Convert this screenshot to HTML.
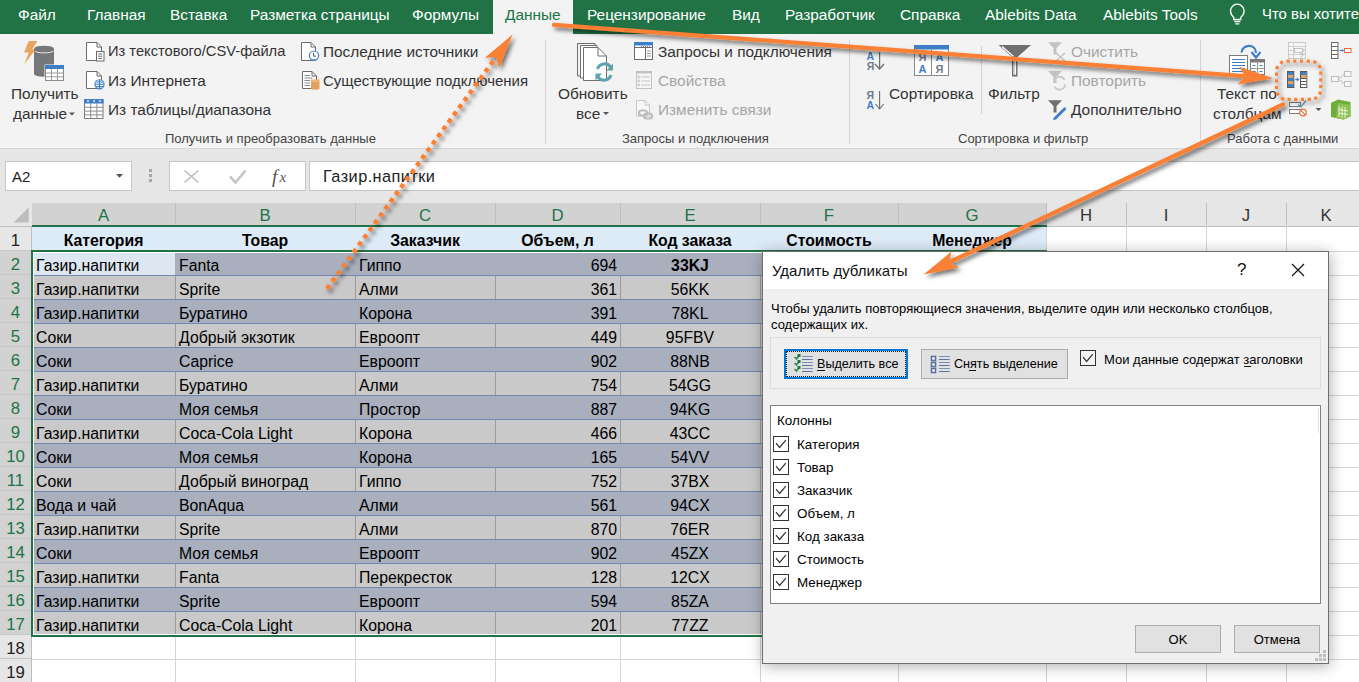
<!DOCTYPE html><html><head><meta charset="utf-8"><style>
*{margin:0;padding:0;box-sizing:border-box}
html,body{width:1359px;height:682px;overflow:hidden;background:#fff;font-family:"Liberation Sans",sans-serif;position:relative}
div,span,svg{position:absolute}
.t{white-space:nowrap;line-height:1}
.tab{color:#fff;font-size:15.4px;top:6.5px}
.rb{color:#333;font-size:15.4px;white-space:nowrap;line-height:1}
.dis{color:#a6a6a6}
.grp{color:#444;font-size:13px;white-space:nowrap;line-height:1;top:132px}
.cell{font-size:15.8px;color:#000;white-space:nowrap;line-height:1}
.dlg{font-size:13px;color:#000;white-space:nowrap;line-height:1}
</style></head><body>
<div style="left:0;top:0;width:1359px;height:34px;background:#217346"></div>
<div style="left:493px;top:0;width:80px;height:34px;background:#f3f3f3"></div>
<div class="t tab" style="left:18px;color:#fff;">Файл</div>
<div class="t tab" style="left:87px;color:#fff;">Главная</div>
<div class="t tab" style="left:170px;color:#fff;">Вставка</div>
<div class="t tab" style="left:250px;color:#fff;">Разметка страницы</div>
<div class="t tab" style="left:412px;color:#fff;">Формулы</div>
<div class="t tab" style="left:505px;color:#217346;">Данные</div>
<div class="t tab" style="left:587px;color:#fff;">Рецензирование</div>
<div class="t tab" style="left:732px;color:#fff;">Вид</div>
<div class="t tab" style="left:785px;color:#fff;">Разработчик</div>
<div class="t tab" style="left:900px;color:#fff;">Справка</div>
<div class="t tab" style="left:985px;color:#fff;">Ablebits Data</div>
<div class="t tab" style="left:1103px;color:#fff;">Ablebits Tools</div>
<div class="t tab" style="left:1262px;color:#fff;font-size:14.9px;">Что вы хотите</div>
<div style="left:0;top:34px;width:1359px;height:115px;background:#f3f3f3;border-bottom:1px solid #d6d6d6"></div>
<div style="left:545px;top:40px;width:1px;height:104px;background:#d4d4d4"></div>
<div style="left:849px;top:40px;width:1px;height:104px;background:#d4d4d4"></div>
<div style="left:1200px;top:40px;width:1px;height:104px;background:#d4d4d4"></div>
<div style="left:981px;top:46px;width:1px;height:68px;background:#d4d4d4"></div>
<div class="rb " style="left:108px;top:44px;font-size:14.7px">Из текстового/CSV-файла</div>
<div class="rb " style="left:108px;top:73px;font-size:15.4px">Из Интернета</div>
<div class="rb " style="left:108px;top:102px;font-size:15.4px">Из таблицы/диапазона</div>
<div class="rb " style="left:323px;top:44px;font-size:15.4px">Последние источники</div>
<div class="rb " style="left:323px;top:73px;font-size:15.0px">Существующие подключения</div>
<div class="rb " style="left:11px;top:86px;font-size:15.4px">Получить</div>
<div class="rb " style="left:13px;top:106px;font-size:15.4px">данные</div>
<div class="rb " style="left:558px;top:86px;font-size:15.4px">Обновить</div>
<div class="rb " style="left:576px;top:106px;font-size:15.4px">все</div>
<div class="rb " style="left:658px;top:44px;font-size:15.4px">Запросы и подключения</div>
<div class="rb dis" style="left:658px;top:73px;font-size:15.4px">Свойства</div>
<div class="rb dis" style="left:658px;top:102px;font-size:15.4px">Изменить связи</div>
<div class="rb " style="left:889px;top:86px;font-size:15.4px">Сортировка</div>
<div class="rb " style="left:988px;top:86px;font-size:15.4px">Фильтр</div>
<div class="rb dis" style="left:1071px;top:44px;font-size:15.4px">Очистить</div>
<div class="rb dis" style="left:1071px;top:73px;font-size:15.4px">Повторить</div>
<div class="rb " style="left:1071px;top:102px;font-size:15.4px">Дополнительно</div>
<div class="rb " style="left:1217px;top:86px;font-size:15.4px">Текст по</div>
<div class="rb " style="left:1213px;top:106px;font-size:15.4px">столбцам</div>
<div class="grp" style="left:165px">Получить и преобразовать данные</div>
<div class="grp" style="left:622px">Запросы и подключения</div>
<div class="grp" style="left:958px">Сортировка и фильтр</div>
<div class="grp" style="left:1227px">Работа с данными</div>
<svg style="left:0;top:0" width="1359" height="150" viewBox="0 0 1359 150">
<!-- bulb -->
<g fill="none" stroke="#fff" stroke-width="1.3">
<path d="M1233.8,17.5 C1231,15 1230.5,12.5 1230.5,11 A6.8,6.8 0 0 1 1244.1,11 C1244.1,12.5 1243.6,15 1240.8,17.5 V19.5 H1233.8 Z"/>
<path d="M1234.3,21.5 H1240.3 M1235.3,23.8 H1239.3"/>
</g>
<!-- Get data -->
<polygon points="28.8,41 37.4,41 32.2,49.2 35.6,49.2 24.4,64.2 28.8,52.6 24,52.6" fill="#e8a55c"/>
<path d="M34,48.6 A10,2.8 0 0 1 54,48.6 V74 A10,2.8 0 0 1 34,74 Z" fill="#76777a"/>
<path d="M34.6,50.8 A9.6,2.6 0 0 0 53.4,50.8" stroke="#e8e8e8" stroke-width="1" fill="none"/>
<rect x="44.5" y="64.5" width="20" height="17" fill="#f3f3f3"/>
<rect x="45.5" y="65.5" width="18" height="15" fill="#fff" stroke="#8a8a8a" stroke-width="1"/>
<rect x="45" y="65" width="19" height="4" fill="#3f7fc7"/>
<path d="M51.5,69 V80.5 M57.5,69 V80.5 M45.5,73 H63.5 M45.5,76.8 H63.5" stroke="#9a9a9a" stroke-width="1"/>
<!-- doc text -->
<g stroke="#6b6b6b" stroke-width="1" fill="#fff">
<path d="M86.5,42.5 H97 L101.5,47 V60.5 H86.5 Z"/>
<path d="M97,42.5 V47 H101.5" fill="none"/>
<rect x="96.5" y="51.5" width="7.5" height="9.5"/>
<path d="M98.2,54 H102.2 M98.2,56.2 H102.2 M98.2,58.4 H102.2" fill="none"/>
</g>
<!-- doc globe -->
<g stroke="#6b6b6b" stroke-width="1" fill="#fff">
<path d="M86.5,71.5 H97 L101.5,76 V88.5 H86.5 Z"/>
<path d="M97,71.5 V76 H101.5" fill="none"/>
</g>
<g stroke="#3c7fc6" stroke-width="1.1" fill="#fff">
<circle cx="99.5" cy="84.3" r="4.6"/>
<path d="M94.9,84.3 H104.1 M99.5,79.7 V88.9 M96,82 H103 M96,86.6 H103" fill="none"/>
</g>
<!-- table range -->
<rect x="84.5" y="99.5" width="18.5" height="19" fill="#fff" stroke="#7b7b7b"/>
<rect x="84" y="99" width="19.5" height="4.5" fill="#3f7fc7"/>
<path d="M86.5,100.5 h3 l-1.5,1.8z M92.5,100.5 h3 l-1.5,1.8z M98.5,100.5 h3 l-1.5,1.8z" fill="#fff"/>
<path d="M90.7,103.5 V118.5 M96.9,103.5 V118.5 M84.5,107.3 H103 M84.5,111.1 H103 M84.5,114.9 H103" stroke="#8c8c8c" stroke-width="1"/>
<!-- doc clock -->
<g stroke="#6b6b6b" stroke-width="1" fill="#fff">
<path d="M301.5,42.5 H311 L315.5,47 V60.5 H301.5 Z"/>
<path d="M311,42.5 V47 H315.5" fill="none"/>
</g>
<circle cx="314" cy="55.6" r="4.6" fill="#fff" stroke="#3c7fc6" stroke-width="1.2"/>
<path d="M313.6,52.8 V56.2 H316" stroke="#555" stroke-width="1" fill="none"/>
<!-- doc existing -->
<g stroke="#6b6b6b" stroke-width="1" fill="#fff">
<path d="M302.5,71.5 H312 L316.5,76 V88.5 H302.5 Z"/>
<path d="M312,71.5 V76 H316.5" fill="none"/>
<path d="M304.5,75.5 H310 M304.5,78 H312 M304.5,80.5 H310 M304.5,83 H310 M304.5,85.5 H310" fill="none" stroke="#8a8a8a"/>
</g>
<path d="M311,79.5 H319.5 V88.5 A4.25,1.2 0 0 1 311,88.5 Z" fill="#e2a35f"/>
<path d="M311.5,81 H319" stroke="#f5d9b0" stroke-width="0.8"/>
<!-- refresh all -->
<g stroke="#6f6f6f" stroke-width="1" fill="#fff">
<path d="M577.5,43.5 H595 V76 H577.5 Z" fill="none"/>
<path d="M580.5,45.5 H597 V78 H580.5 Z"/>
<path d="M583.5,47.5 H598 L606.5,56 V80.5 H583.5 Z"/>
<path d="M598,47.5 V56 H606.5" fill="none"/>
</g>
<g fill="none" stroke="#5fa3ad" stroke-width="3">
<path d="M597.5,69 A7.3,7.3 0 0 1 610.8,67.5"/>
<path d="M611,75 A7.3,7.3 0 0 1 597.7,76.5"/>
</g>
<polygon points="613,63.5 613,70.5 606.5,70.5" fill="#5fa3ad"/>
<polygon points="595.5,80.5 595.5,73.5 602,73.5" fill="#5fa3ad"/>
<!-- queries -->
<rect x="634.5" y="42.5" width="18" height="17" fill="#fff" stroke="#6b6b6b"/>
<rect x="634" y="42" width="19" height="3.5" fill="#3f7fc7"/>
<path d="M635,47.5 H652 M645.5,48 V59.5" stroke="#6b6b6b" stroke-width="1"/>
<path d="M647,51 H651 M647,53.5 H651 M647,56 H651" stroke="#9a9a9a" stroke-width="1"/>
<path d="M641,46.5 h1 M643,46.5 h1 M645,46.5 h1 M647,46.5 h1 M649,46.5 h1" stroke="#888" stroke-width="1"/>
<!-- properties (disabled) -->
<rect x="636.5" y="71.5" width="15" height="17" fill="#f6f6f6" stroke="#c3c3c3"/>
<rect x="636" y="71" width="16" height="2.5" fill="#c3c3c3"/>
<path d="M641,77 H650 M641,81 H650 M641,85 H650" stroke="#c3c3c3"/>
<circle cx="638.8" cy="77" r="1" fill="none" stroke="#c3c3c3"/><circle cx="638.8" cy="81" r="1" fill="none" stroke="#c3c3c3"/><circle cx="638.8" cy="85" r="1" fill="none" stroke="#c3c3c3"/>
<!-- edit links (disabled) -->
<path d="M636.5,100.5 H645 L649.5,105 V116 H636.5 Z" fill="#f6f6f6" stroke="#c9c9c9"/>
<path d="M645,100.5 V105 H649.5" fill="none" stroke="#c9c9c9"/>
<g fill="none" stroke="#bdbdbd" stroke-width="2.2">
<rect x="639" y="110.5" width="8" height="5" rx="2.5"/>
<rect x="644" y="113.5" width="8" height="5" rx="2.5"/>
</g>
<!-- dropdown arrows -->
<polygon points="69,112.5 75,112.5 72,115.5" fill="#555"/>
<polygon points="603,112 609,112 606,115" fill="#555"/>
<!-- sort A-Z -->
<g font-family="Liberation Sans" font-weight="bold" font-size="10.5">
<text x="866.5" y="59.8" fill="#3f7fc7">А</text>
<text x="866.8" y="69.8" fill="#6e7a8a">Я</text>
<text x="866.5" y="98.5" fill="#6e7a8a">Я</text>
<text x="866.5" y="108.8" fill="#3f7fc7">А</text>
</g>
<path d="M879.6,52 V69 M875,64 L879.6,69 L884,64" fill="none" stroke="#6b6b6b" stroke-width="1.2"/>
<path d="M879.6,91 V109 M875.5,104 L879.6,109 L883.7,104" fill="none" stroke="#6b6b6b" stroke-width="1.1"/>
<!-- sort dialog -->
<rect x="914.5" y="45.5" width="34" height="30" fill="#fff" stroke="#8a8a8a"/>
<rect x="914" y="45" width="35" height="4.5" fill="#3f7fc7"/>
<path d="M931.5,49.5 V75.5" stroke="#8a8a8a"/>
<g font-family="Liberation Sans" font-weight="bold" font-size="11">
<text x="918.5" y="61" fill="#6e7a8a">Я</text>
<text x="918.5" y="72.5" fill="#3f7fc7">А</text>
<text x="935.5" y="61" fill="#3f7fc7">А</text>
<text x="935.5" y="72.5" fill="#6e7a8a">Я</text>
</g>
<!-- filter -->
<path d="M998.6,45 H1031 L1017.5,57 V76.5 H1012 V57 Z" fill="#6f6f6f"/>
<path d="M1014,59 V74.8 M1015.5,59 V74.8" stroke="#fff" stroke-width="1.2"/>
<path d="M1002,46.5 L1013.5,56.5" stroke="#fff" stroke-width="1.3"/>
<!-- clear (disabled) -->
<path d="M1048,42.3 H1062 L1056.5,48 V54.5 H1053.5 V48 Z" fill="#c2c2c2"/>
<path d="M1056,53 L1065,61 M1065,53 L1056,61" stroke="#c2c2c2" stroke-width="1.5"/>
<!-- reapply (disabled) -->
<path d="M1048,71 H1062 L1056.5,77 V83 H1053.5 V77 Z" fill="#c2c2c2"/>
<g fill="none" stroke="#c9c9c9" stroke-width="1.8">
<path d="M1054,82 A5.5,5.5 0 0 1 1064.5,80"/>
<path d="M1065,84.5 A5.5,5.5 0 0 1 1054.5,86.5"/>
</g>
<!-- advanced -->
<path d="M1048,100.3 H1062 L1056.5,106 V112.5 H1053.5 V106 Z" fill="#6f6f6f"/>
<path d="M1054,117.5 L1064.5,107 L1066.5,109 L1056,119.5 L1053,120 Z" fill="#3f7fc7"/>
<!-- text to columns -->
<rect x="1229.5" y="55.5" width="18" height="19" fill="#fff" stroke="#7b7b7b"/>
<path d="M1232,59.5 H1245 M1232,62.5 H1245 M1232,65.5 H1245 M1232,68.5 H1245 M1232,71.5 H1245" stroke="#3f7fc7" stroke-width="1"/>
<rect x="1250.5" y="59.5" width="14" height="15" fill="#fff" stroke="#7b7b7b"/>
<rect x="1250" y="59" width="15" height="3.5" fill="#7b7b7b"/>
<path d="M1257.5,62.5 V74.5 M1250.5,68.5 H1264.5" stroke="#9a9a9a"/>
<path d="M1252.5,65.5 h3 M1259.5,65.5 h3 M1252.5,71.5 h3 M1259.5,71.5 h3" stroke="#3f7fc7" stroke-width="1.2"/>
<path d="M1241.5,52.5 C1242,44 1256,43 1256,53" fill="none" stroke="#3f7fc7" stroke-width="2.2"/>
<path d="M1251.5,52 L1256,57.5 L1260.5,52" fill="none" stroke="#3f7fc7" stroke-width="2.2"/>
<!-- flash fill (disabled) -->
<rect x="1288.5" y="42.5" width="17" height="16" fill="#f7f7f7" stroke="#c9c9c9"/>
<path d="M1288.5,46.5 H1305.5 M1288.5,50.5 H1305.5 M1288.5,54.5 H1305.5 M1293.5,42.5 V58.5" stroke="#d0d0d0"/>
<rect x="1294.5" y="48.5" width="8" height="4" fill="#f7f7f7" stroke="#c0c0c0"/>
<path d="M1303,49 L1299,55 H1302 L1298.5,60 L1305.5,53.5 H1302.5 L1305,49 Z" fill="#c9c9c9"/>
<!-- remove duplicates -->
<rect x="1287.5" y="71.5" width="6.3" height="16" fill="#3f7fc7" stroke="#5a5a5a"/>
<rect x="1288" y="74.9" width="5.3" height="3" fill="#e2a35f"/>
<rect x="1288" y="81.1" width="5.3" height="3" fill="#e2a35f"/>
<rect x="1300.5" y="71.5" width="6.3" height="16" fill="#fff" stroke="#5a5a5a"/>
<rect x="1301" y="72" width="5.3" height="3" fill="#3f7fc7"/>
<rect x="1301" y="75" width="5.3" height="3" fill="#e2a35f"/>
<path d="M1301,78.5 H1306.3 M1301,81.5 H1306.3 M1301,84.5 H1306.3" stroke="#5a5a5a"/>
<path d="M1295.2,79.5 H1298.5" stroke="#3f7fc7" stroke-width="1.2"/>
<polygon points="1299.3,79.5 1296.8,77.6 1296.8,81.4" fill="#3f7fc7"/>
<!-- data validation -->
<rect x="1289.5" y="102.5" width="11" height="4" fill="#fff" stroke="#7b7b7b"/>
<rect x="1289.5" y="109.5" width="11" height="4" fill="#fff" stroke="#7b7b7b"/>
<path d="M1298,104.5 L1301,107 L1306,100.5" fill="none" stroke="#5fa3ad" stroke-width="1.3"/>
<circle cx="1303" cy="112.5" r="3.3" fill="#fff" stroke="#e56d3a" stroke-width="1.2"/>
<path d="M1300.8,110.3 L1305.2,114.7" stroke="#e56d3a" stroke-width="1.2"/>
<polygon points="1315.5,108 1321.5,108 1318.5,111" fill="#555"/>
<!-- consolidate -->
<rect x="1331.5" y="42.5" width="6.5" height="16" fill="#fff" stroke="#6b6b6b"/>
<path d="M1331.5,46.5 H1338 M1331.5,50.5 H1338 M1331.5,54.5 H1338" stroke="#6b6b6b"/>
<path d="M1339.5,50.5 H1343.5" stroke="#3f7fc7"/>
<polygon points="1344,50.5 1342,49 1342,52" fill="#3f7fc7"/>
<rect x="1344.5" y="48.5" width="6.5" height="4" fill="#fff" stroke="#e56d3a"/>
<!-- relationships (disabled) -->
<g fill="#f7f7f7" stroke="#bdbdbd">
<rect x="1331.5" y="76.5" width="7" height="5"/>
<rect x="1344.5" y="71.5" width="6.5" height="5"/>
<rect x="1344.5" y="81.5" width="6.5" height="5"/>
<path d="M1338.5,79 L1344.5,74 M1338.5,79 L1344.5,84" fill="none"/>
</g>
<!-- data model -->
<path d="M1331,103 L1338,99.5 L1350.5,102 V116.5 L1343.5,119.5 L1331,117 Z" fill="#6fae3c"/>
<path d="M1338,103 L1350.5,105 V116.5 L1343.5,119.5 L1336,118" fill="#8cc152"/>
<path d="M1339,106 V117 M1342,106.5 V118 M1345,107 V118 M1339,109.5 L1348,111 M1339,113 L1348,114.5" stroke="#fff" stroke-width="0.8" fill="none"/>
</svg>
<div style="left:0;top:149px;width:1359px;height:54px;background:#e6e6e6"></div>
<div style="left:5px;top:161px;width:127px;height:30px;background:#fff;border:1px solid #c6c6c6"></div>
<div class="t" style="left:12px;top:169px;font-size:15px;color:#222">A2</div>
<div style="left:169px;top:161px;width:137px;height:30px;background:#fff;border:1px solid #c6c6c6"></div>
<div style="left:309px;top:161px;width:1060px;height:30px;background:#fff;border:1px solid #c6c6c6"></div>
<div class="t" style="left:323px;top:168px;font-size:16.3px;letter-spacing:0.45px;color:#222">Газир.напитки</div>
<svg style="left:0;top:150px" width="320" height="50" viewBox="0 150 320 50"><polygon points="116,174 123,174 119.5,177.8" fill="#555"/><rect x="149" y="169" width="3" height="3" fill="#a6a6a6"/><rect x="149" y="174" width="3" height="3" fill="#a6a6a6"/><rect x="149" y="179" width="3" height="3" fill="#a6a6a6"/><path d="M184.5,170.5 L198.5,182.5 M198.5,170.5 L184.5,182.5" stroke="#bdbdbd" stroke-width="1.6"/><path d="M230,176.5 L235.5,182.5 L245.5,170.5" fill="none" stroke="#c6c6c6" stroke-width="2.6"/><text x="272" y="183" font-family="Liberation Serif" font-style="italic" font-size="19" fill="#555">f</text><text x="279.5" y="182" font-family="Liberation Serif" font-style="italic" font-size="15" fill="#555">x</text></svg>
<div style="left:0;top:203px;width:1359px;height:24px;background:#e6e6e6;border-bottom:1px solid #bdbdbd"></div>
<div style="left:32px;top:203px;width:143px;height:23px;background:#d2d2d2"></div>
<div class="t" style="left:32px;top:208px;width:143px;text-align:center;font-size:16.8px;color:#217346">A</div>
<div style="left:175px;top:203px;width:180px;height:23px;background:#d2d2d2"></div>
<div class="t" style="left:175px;top:208px;width:180px;text-align:center;font-size:16.8px;color:#217346">B</div>
<div style="left:355px;top:203px;width:140px;height:23px;background:#d2d2d2"></div>
<div class="t" style="left:355px;top:208px;width:140px;text-align:center;font-size:16.8px;color:#217346">C</div>
<div style="left:495px;top:203px;width:125px;height:23px;background:#d2d2d2"></div>
<div class="t" style="left:495px;top:208px;width:125px;text-align:center;font-size:16.8px;color:#217346">D</div>
<div style="left:620px;top:203px;width:140px;height:23px;background:#d2d2d2"></div>
<div class="t" style="left:620px;top:208px;width:140px;text-align:center;font-size:16.8px;color:#217346">E</div>
<div style="left:760px;top:203px;width:138px;height:23px;background:#d2d2d2"></div>
<div class="t" style="left:760px;top:208px;width:138px;text-align:center;font-size:16.8px;color:#217346">F</div>
<div style="left:898px;top:203px;width:148px;height:23px;background:#d2d2d2"></div>
<div class="t" style="left:898px;top:208px;width:148px;text-align:center;font-size:16.8px;color:#217346">G</div>
<div style="left:1046px;top:203px;width:80px;height:23px;background:#e6e6e6"></div>
<div class="t" style="left:1046px;top:208px;width:80px;text-align:center;font-size:16.8px;color:#333">H</div>
<div style="left:1126px;top:203px;width:80px;height:23px;background:#e6e6e6"></div>
<div class="t" style="left:1126px;top:208px;width:80px;text-align:center;font-size:16.8px;color:#333">I</div>
<div style="left:1206px;top:203px;width:80px;height:23px;background:#e6e6e6"></div>
<div class="t" style="left:1206px;top:208px;width:80px;text-align:center;font-size:16.8px;color:#333">J</div>
<div style="left:1286px;top:203px;width:80px;height:23px;background:#e6e6e6"></div>
<div class="t" style="left:1286px;top:208px;width:80px;text-align:center;font-size:16.8px;color:#333">K</div>
<div style="left:175px;top:203px;width:1px;height:22px;background:#bfbfbf"></div>
<div style="left:355px;top:203px;width:1px;height:22px;background:#bfbfbf"></div>
<div style="left:495px;top:203px;width:1px;height:22px;background:#bfbfbf"></div>
<div style="left:620px;top:203px;width:1px;height:22px;background:#bfbfbf"></div>
<div style="left:760px;top:203px;width:1px;height:22px;background:#bfbfbf"></div>
<div style="left:898px;top:203px;width:1px;height:22px;background:#bfbfbf"></div>
<div style="left:1046px;top:203px;width:1px;height:22px;background:#bfbfbf"></div>
<div style="left:1126px;top:203px;width:1px;height:22px;background:#bfbfbf"></div>
<div style="left:1206px;top:203px;width:1px;height:22px;background:#bfbfbf"></div>
<div style="left:1286px;top:203px;width:1px;height:22px;background:#bfbfbf"></div>
<div style="left:1366px;top:203px;width:1px;height:22px;background:#bfbfbf"></div>
<div style="left:32px;top:225px;width:1015px;height:2px;background:#217346"></div>
<svg style="left:0;top:203px" width="32" height="22" viewBox="0 203 32 22"><polygon points="13.5,222.5 28.7,222.5 28.7,207.6" fill="#bdbdbd"/></svg>
<div style="left:0;top:227px;width:32px;height:456px;background:#e6e6e6;border-right:1px solid #bdbdbd"></div>
<div style="left:32px;top:227px;width:1327px;height:456px;background:#fff"></div>
<div style="left:0;top:227px;width:31px;height:24px;background:#e6e6e6;border-bottom:1px solid #c6c6c6"></div>
<div class="t" style="left:0;top:233px;width:31px;text-align:center;font-size:16.8px;color:#222">1</div>
<div style="left:32px;top:251px;width:1327px;height:1px;background:#d4d4d4"></div>
<div style="left:0;top:251px;width:31px;height:24px;background:#d2d2d2;border-bottom:1px solid #c6c6c6"></div>
<div class="t" style="left:0;top:257px;width:31px;text-align:center;font-size:16.8px;color:#217346">2</div>
<div style="left:32px;top:275px;width:1327px;height:1px;background:#d4d4d4"></div>
<div style="left:0;top:275px;width:31px;height:24px;background:#d2d2d2;border-bottom:1px solid #c6c6c6"></div>
<div class="t" style="left:0;top:281px;width:31px;text-align:center;font-size:16.8px;color:#217346">3</div>
<div style="left:32px;top:299px;width:1327px;height:1px;background:#d4d4d4"></div>
<div style="left:0;top:299px;width:31px;height:24px;background:#d2d2d2;border-bottom:1px solid #c6c6c6"></div>
<div class="t" style="left:0;top:305px;width:31px;text-align:center;font-size:16.8px;color:#217346">4</div>
<div style="left:32px;top:323px;width:1327px;height:1px;background:#d4d4d4"></div>
<div style="left:0;top:323px;width:31px;height:24px;background:#d2d2d2;border-bottom:1px solid #c6c6c6"></div>
<div class="t" style="left:0;top:329px;width:31px;text-align:center;font-size:16.8px;color:#217346">5</div>
<div style="left:32px;top:347px;width:1327px;height:1px;background:#d4d4d4"></div>
<div style="left:0;top:347px;width:31px;height:24px;background:#d2d2d2;border-bottom:1px solid #c6c6c6"></div>
<div class="t" style="left:0;top:353px;width:31px;text-align:center;font-size:16.8px;color:#217346">6</div>
<div style="left:32px;top:371px;width:1327px;height:1px;background:#d4d4d4"></div>
<div style="left:0;top:371px;width:31px;height:24px;background:#d2d2d2;border-bottom:1px solid #c6c6c6"></div>
<div class="t" style="left:0;top:377px;width:31px;text-align:center;font-size:16.8px;color:#217346">7</div>
<div style="left:32px;top:395px;width:1327px;height:1px;background:#d4d4d4"></div>
<div style="left:0;top:395px;width:31px;height:24px;background:#d2d2d2;border-bottom:1px solid #c6c6c6"></div>
<div class="t" style="left:0;top:401px;width:31px;text-align:center;font-size:16.8px;color:#217346">8</div>
<div style="left:32px;top:419px;width:1327px;height:1px;background:#d4d4d4"></div>
<div style="left:0;top:419px;width:31px;height:24px;background:#d2d2d2;border-bottom:1px solid #c6c6c6"></div>
<div class="t" style="left:0;top:425px;width:31px;text-align:center;font-size:16.8px;color:#217346">9</div>
<div style="left:32px;top:443px;width:1327px;height:1px;background:#d4d4d4"></div>
<div style="left:0;top:443px;width:31px;height:24px;background:#d2d2d2;border-bottom:1px solid #c6c6c6"></div>
<div class="t" style="left:0;top:449px;width:31px;text-align:center;font-size:16.8px;color:#217346">10</div>
<div style="left:32px;top:467px;width:1327px;height:1px;background:#d4d4d4"></div>
<div style="left:0;top:467px;width:31px;height:24px;background:#d2d2d2;border-bottom:1px solid #c6c6c6"></div>
<div class="t" style="left:0;top:473px;width:31px;text-align:center;font-size:16.8px;color:#217346">11</div>
<div style="left:32px;top:491px;width:1327px;height:1px;background:#d4d4d4"></div>
<div style="left:0;top:491px;width:31px;height:24px;background:#d2d2d2;border-bottom:1px solid #c6c6c6"></div>
<div class="t" style="left:0;top:497px;width:31px;text-align:center;font-size:16.8px;color:#217346">12</div>
<div style="left:32px;top:515px;width:1327px;height:1px;background:#d4d4d4"></div>
<div style="left:0;top:515px;width:31px;height:24px;background:#d2d2d2;border-bottom:1px solid #c6c6c6"></div>
<div class="t" style="left:0;top:521px;width:31px;text-align:center;font-size:16.8px;color:#217346">13</div>
<div style="left:32px;top:539px;width:1327px;height:1px;background:#d4d4d4"></div>
<div style="left:0;top:539px;width:31px;height:24px;background:#d2d2d2;border-bottom:1px solid #c6c6c6"></div>
<div class="t" style="left:0;top:545px;width:31px;text-align:center;font-size:16.8px;color:#217346">14</div>
<div style="left:32px;top:563px;width:1327px;height:1px;background:#d4d4d4"></div>
<div style="left:0;top:563px;width:31px;height:24px;background:#d2d2d2;border-bottom:1px solid #c6c6c6"></div>
<div class="t" style="left:0;top:569px;width:31px;text-align:center;font-size:16.8px;color:#217346">15</div>
<div style="left:32px;top:587px;width:1327px;height:1px;background:#d4d4d4"></div>
<div style="left:0;top:587px;width:31px;height:24px;background:#d2d2d2;border-bottom:1px solid #c6c6c6"></div>
<div class="t" style="left:0;top:593px;width:31px;text-align:center;font-size:16.8px;color:#217346">16</div>
<div style="left:32px;top:611px;width:1327px;height:1px;background:#d4d4d4"></div>
<div style="left:0;top:611px;width:31px;height:24px;background:#d2d2d2;border-bottom:1px solid #c6c6c6"></div>
<div class="t" style="left:0;top:617px;width:31px;text-align:center;font-size:16.8px;color:#217346">17</div>
<div style="left:32px;top:635px;width:1327px;height:1px;background:#d4d4d4"></div>
<div style="left:0;top:635px;width:31px;height:24px;background:#e6e6e6;border-bottom:1px solid #c6c6c6"></div>
<div class="t" style="left:0;top:641px;width:31px;text-align:center;font-size:16.8px;color:#222">18</div>
<div style="left:32px;top:659px;width:1327px;height:1px;background:#d4d4d4"></div>
<div style="left:0;top:659px;width:31px;height:24px;background:#e6e6e6;border-bottom:1px solid #c6c6c6"></div>
<div class="t" style="left:0;top:665px;width:31px;text-align:center;font-size:16.8px;color:#222">19</div>
<div style="left:32px;top:683px;width:1327px;height:1px;background:#d4d4d4"></div>
<div style="left:175px;top:227px;width:1px;height:456px;background:#d4d4d4"></div>
<div style="left:355px;top:227px;width:1px;height:456px;background:#d4d4d4"></div>
<div style="left:495px;top:227px;width:1px;height:456px;background:#d4d4d4"></div>
<div style="left:620px;top:227px;width:1px;height:456px;background:#d4d4d4"></div>
<div style="left:760px;top:227px;width:1px;height:456px;background:#d4d4d4"></div>
<div style="left:898px;top:227px;width:1px;height:456px;background:#d4d4d4"></div>
<div style="left:1046px;top:227px;width:1px;height:456px;background:#d4d4d4"></div>
<div style="left:1126px;top:227px;width:1px;height:456px;background:#d4d4d4"></div>
<div style="left:1206px;top:227px;width:1px;height:456px;background:#d4d4d4"></div>
<div style="left:1286px;top:227px;width:1px;height:456px;background:#d4d4d4"></div>
<div style="left:1366px;top:227px;width:1px;height:456px;background:#d4d4d4"></div>
<div style="left:32px;top:227px;width:1014px;height:23px;background:#ddebf7"></div>
<div class="t cell" style="left:32px;top:233px;width:143px;text-align:center;font-weight:bold">Категория</div>
<div class="t cell" style="left:175px;top:233px;width:180px;text-align:center;font-weight:bold">Товар</div>
<div class="t cell" style="left:355px;top:233px;width:140px;text-align:center;font-weight:bold">Заказчик</div>
<div class="t cell" style="left:495px;top:233px;width:125px;text-align:center;font-weight:bold">Объем, л</div>
<div class="t cell" style="left:620px;top:233px;width:140px;text-align:center;font-weight:bold">Код заказа</div>
<div class="t cell" style="left:760px;top:233px;width:138px;text-align:center;font-weight:bold">Стоимость</div>
<div class="t cell" style="left:898px;top:233px;width:148px;text-align:center;font-weight:bold">Менеджер</div>
<div style="left:33px;top:252px;width:1012px;height:383px;background:#fff"></div>
<div style="left:34px;top:253px;width:1010px;height:22px;background:#a9afbd"></div>
<div class="t cell" style="left:36px;top:258px">Газир.напитки</div>
<div class="t cell" style="left:179px;top:258px">Fanta</div>
<div class="t cell" style="left:359px;top:258px">Гиппо</div>
<div class="t cell" style="left:495px;top:258px;width:122px;text-align:right">694</div>
<div class="t cell" style="left:620px;top:258px;width:140px;text-align:center;font-weight:bold;">33KJ</div>
<div style="left:34px;top:275px;width:1010px;height:1px;background:#7188b4"></div>
<div style="left:34px;top:276px;width:1010px;height:23px;background:#c9c9c9"></div>
<div style="left:175px;top:276px;width:1px;height:23px;background:#9c9c9c"></div>
<div style="left:355px;top:276px;width:1px;height:23px;background:#9c9c9c"></div>
<div style="left:495px;top:276px;width:1px;height:23px;background:#9c9c9c"></div>
<div style="left:620px;top:276px;width:1px;height:23px;background:#9c9c9c"></div>
<div style="left:760px;top:276px;width:1px;height:23px;background:#9c9c9c"></div>
<div style="left:898px;top:276px;width:1px;height:23px;background:#9c9c9c"></div>
<div class="t cell" style="left:36px;top:282px">Газир.напитки</div>
<div class="t cell" style="left:179px;top:282px">Sprite</div>
<div class="t cell" style="left:359px;top:282px">Алми</div>
<div class="t cell" style="left:495px;top:282px;width:122px;text-align:right">361</div>
<div class="t cell" style="left:620px;top:282px;width:140px;text-align:center;">56KK</div>
<div style="left:34px;top:299px;width:1010px;height:1px;background:#7188b4"></div>
<div style="left:34px;top:300px;width:1010px;height:23px;background:#a9afbd"></div>
<div class="t cell" style="left:36px;top:306px">Газир.напитки</div>
<div class="t cell" style="left:179px;top:306px">Буратино</div>
<div class="t cell" style="left:359px;top:306px">Корона</div>
<div class="t cell" style="left:495px;top:306px;width:122px;text-align:right">391</div>
<div class="t cell" style="left:620px;top:306px;width:140px;text-align:center;">78KL</div>
<div style="left:34px;top:323px;width:1010px;height:1px;background:#7188b4"></div>
<div style="left:34px;top:324px;width:1010px;height:23px;background:#c9c9c9"></div>
<div style="left:175px;top:324px;width:1px;height:23px;background:#9c9c9c"></div>
<div style="left:355px;top:324px;width:1px;height:23px;background:#9c9c9c"></div>
<div style="left:495px;top:324px;width:1px;height:23px;background:#9c9c9c"></div>
<div style="left:620px;top:324px;width:1px;height:23px;background:#9c9c9c"></div>
<div style="left:760px;top:324px;width:1px;height:23px;background:#9c9c9c"></div>
<div style="left:898px;top:324px;width:1px;height:23px;background:#9c9c9c"></div>
<div class="t cell" style="left:36px;top:330px">Соки</div>
<div class="t cell" style="left:179px;top:330px">Добрый экзотик</div>
<div class="t cell" style="left:359px;top:330px">Евроопт</div>
<div class="t cell" style="left:495px;top:330px;width:122px;text-align:right">449</div>
<div class="t cell" style="left:620px;top:330px;width:140px;text-align:center;">95FBV</div>
<div style="left:34px;top:347px;width:1010px;height:1px;background:#7188b4"></div>
<div style="left:34px;top:348px;width:1010px;height:23px;background:#a9afbd"></div>
<div class="t cell" style="left:36px;top:354px">Соки</div>
<div class="t cell" style="left:179px;top:354px">Caprice</div>
<div class="t cell" style="left:359px;top:354px">Евроопт</div>
<div class="t cell" style="left:495px;top:354px;width:122px;text-align:right">902</div>
<div class="t cell" style="left:620px;top:354px;width:140px;text-align:center;">88NB</div>
<div style="left:34px;top:371px;width:1010px;height:1px;background:#7188b4"></div>
<div style="left:34px;top:372px;width:1010px;height:23px;background:#c9c9c9"></div>
<div style="left:175px;top:372px;width:1px;height:23px;background:#9c9c9c"></div>
<div style="left:355px;top:372px;width:1px;height:23px;background:#9c9c9c"></div>
<div style="left:495px;top:372px;width:1px;height:23px;background:#9c9c9c"></div>
<div style="left:620px;top:372px;width:1px;height:23px;background:#9c9c9c"></div>
<div style="left:760px;top:372px;width:1px;height:23px;background:#9c9c9c"></div>
<div style="left:898px;top:372px;width:1px;height:23px;background:#9c9c9c"></div>
<div class="t cell" style="left:36px;top:378px">Газир.напитки</div>
<div class="t cell" style="left:179px;top:378px">Буратино</div>
<div class="t cell" style="left:359px;top:378px">Алми</div>
<div class="t cell" style="left:495px;top:378px;width:122px;text-align:right">754</div>
<div class="t cell" style="left:620px;top:378px;width:140px;text-align:center;">54GG</div>
<div style="left:34px;top:395px;width:1010px;height:1px;background:#7188b4"></div>
<div style="left:34px;top:396px;width:1010px;height:23px;background:#a9afbd"></div>
<div class="t cell" style="left:36px;top:402px">Соки</div>
<div class="t cell" style="left:179px;top:402px">Моя семья</div>
<div class="t cell" style="left:359px;top:402px">Простор</div>
<div class="t cell" style="left:495px;top:402px;width:122px;text-align:right">887</div>
<div class="t cell" style="left:620px;top:402px;width:140px;text-align:center;">94KG</div>
<div style="left:34px;top:419px;width:1010px;height:1px;background:#7188b4"></div>
<div style="left:34px;top:420px;width:1010px;height:23px;background:#c9c9c9"></div>
<div style="left:175px;top:420px;width:1px;height:23px;background:#9c9c9c"></div>
<div style="left:355px;top:420px;width:1px;height:23px;background:#9c9c9c"></div>
<div style="left:495px;top:420px;width:1px;height:23px;background:#9c9c9c"></div>
<div style="left:620px;top:420px;width:1px;height:23px;background:#9c9c9c"></div>
<div style="left:760px;top:420px;width:1px;height:23px;background:#9c9c9c"></div>
<div style="left:898px;top:420px;width:1px;height:23px;background:#9c9c9c"></div>
<div class="t cell" style="left:36px;top:426px">Газир.напитки</div>
<div class="t cell" style="left:179px;top:426px">Coca-Cola Light</div>
<div class="t cell" style="left:359px;top:426px">Корона</div>
<div class="t cell" style="left:495px;top:426px;width:122px;text-align:right">466</div>
<div class="t cell" style="left:620px;top:426px;width:140px;text-align:center;">43CC</div>
<div style="left:34px;top:443px;width:1010px;height:1px;background:#7188b4"></div>
<div style="left:34px;top:444px;width:1010px;height:23px;background:#a9afbd"></div>
<div class="t cell" style="left:36px;top:450px">Соки</div>
<div class="t cell" style="left:179px;top:450px">Моя семья</div>
<div class="t cell" style="left:359px;top:450px">Корона</div>
<div class="t cell" style="left:495px;top:450px;width:122px;text-align:right">165</div>
<div class="t cell" style="left:620px;top:450px;width:140px;text-align:center;">54VV</div>
<div style="left:34px;top:467px;width:1010px;height:1px;background:#7188b4"></div>
<div style="left:34px;top:468px;width:1010px;height:23px;background:#c9c9c9"></div>
<div style="left:175px;top:468px;width:1px;height:23px;background:#9c9c9c"></div>
<div style="left:355px;top:468px;width:1px;height:23px;background:#9c9c9c"></div>
<div style="left:495px;top:468px;width:1px;height:23px;background:#9c9c9c"></div>
<div style="left:620px;top:468px;width:1px;height:23px;background:#9c9c9c"></div>
<div style="left:760px;top:468px;width:1px;height:23px;background:#9c9c9c"></div>
<div style="left:898px;top:468px;width:1px;height:23px;background:#9c9c9c"></div>
<div class="t cell" style="left:36px;top:474px">Соки</div>
<div class="t cell" style="left:179px;top:474px">Добрый виноград</div>
<div class="t cell" style="left:359px;top:474px">Гиппо</div>
<div class="t cell" style="left:495px;top:474px;width:122px;text-align:right">752</div>
<div class="t cell" style="left:620px;top:474px;width:140px;text-align:center;">37BX</div>
<div style="left:34px;top:491px;width:1010px;height:1px;background:#7188b4"></div>
<div style="left:34px;top:492px;width:1010px;height:23px;background:#a9afbd"></div>
<div class="t cell" style="left:36px;top:498px">Вода и чай</div>
<div class="t cell" style="left:179px;top:498px">BonAqua</div>
<div class="t cell" style="left:359px;top:498px">Алми</div>
<div class="t cell" style="left:495px;top:498px;width:122px;text-align:right">561</div>
<div class="t cell" style="left:620px;top:498px;width:140px;text-align:center;">94CX</div>
<div style="left:34px;top:515px;width:1010px;height:1px;background:#7188b4"></div>
<div style="left:34px;top:516px;width:1010px;height:23px;background:#c9c9c9"></div>
<div style="left:175px;top:516px;width:1px;height:23px;background:#9c9c9c"></div>
<div style="left:355px;top:516px;width:1px;height:23px;background:#9c9c9c"></div>
<div style="left:495px;top:516px;width:1px;height:23px;background:#9c9c9c"></div>
<div style="left:620px;top:516px;width:1px;height:23px;background:#9c9c9c"></div>
<div style="left:760px;top:516px;width:1px;height:23px;background:#9c9c9c"></div>
<div style="left:898px;top:516px;width:1px;height:23px;background:#9c9c9c"></div>
<div class="t cell" style="left:36px;top:522px">Газир.напитки</div>
<div class="t cell" style="left:179px;top:522px">Sprite</div>
<div class="t cell" style="left:359px;top:522px">Алми</div>
<div class="t cell" style="left:495px;top:522px;width:122px;text-align:right">870</div>
<div class="t cell" style="left:620px;top:522px;width:140px;text-align:center;">76ER</div>
<div style="left:34px;top:539px;width:1010px;height:1px;background:#7188b4"></div>
<div style="left:34px;top:540px;width:1010px;height:23px;background:#a9afbd"></div>
<div class="t cell" style="left:36px;top:546px">Соки</div>
<div class="t cell" style="left:179px;top:546px">Моя семья</div>
<div class="t cell" style="left:359px;top:546px">Евроопт</div>
<div class="t cell" style="left:495px;top:546px;width:122px;text-align:right">902</div>
<div class="t cell" style="left:620px;top:546px;width:140px;text-align:center;">45ZX</div>
<div style="left:34px;top:563px;width:1010px;height:1px;background:#7188b4"></div>
<div style="left:34px;top:564px;width:1010px;height:23px;background:#c9c9c9"></div>
<div style="left:175px;top:564px;width:1px;height:23px;background:#9c9c9c"></div>
<div style="left:355px;top:564px;width:1px;height:23px;background:#9c9c9c"></div>
<div style="left:495px;top:564px;width:1px;height:23px;background:#9c9c9c"></div>
<div style="left:620px;top:564px;width:1px;height:23px;background:#9c9c9c"></div>
<div style="left:760px;top:564px;width:1px;height:23px;background:#9c9c9c"></div>
<div style="left:898px;top:564px;width:1px;height:23px;background:#9c9c9c"></div>
<div class="t cell" style="left:36px;top:570px">Газир.напитки</div>
<div class="t cell" style="left:179px;top:570px">Fanta</div>
<div class="t cell" style="left:359px;top:570px">Перекресток</div>
<div class="t cell" style="left:495px;top:570px;width:122px;text-align:right">128</div>
<div class="t cell" style="left:620px;top:570px;width:140px;text-align:center;">12CX</div>
<div style="left:34px;top:587px;width:1010px;height:1px;background:#7188b4"></div>
<div style="left:34px;top:588px;width:1010px;height:23px;background:#a9afbd"></div>
<div class="t cell" style="left:36px;top:594px">Газир.напитки</div>
<div class="t cell" style="left:179px;top:594px">Sprite</div>
<div class="t cell" style="left:359px;top:594px">Евроопт</div>
<div class="t cell" style="left:495px;top:594px;width:122px;text-align:right">594</div>
<div class="t cell" style="left:620px;top:594px;width:140px;text-align:center;">85ZA</div>
<div style="left:34px;top:611px;width:1010px;height:1px;background:#7188b4"></div>
<div style="left:34px;top:612px;width:1010px;height:22px;background:#c9c9c9"></div>
<div style="left:175px;top:612px;width:1px;height:22px;background:#9c9c9c"></div>
<div style="left:355px;top:612px;width:1px;height:22px;background:#9c9c9c"></div>
<div style="left:495px;top:612px;width:1px;height:22px;background:#9c9c9c"></div>
<div style="left:620px;top:612px;width:1px;height:22px;background:#9c9c9c"></div>
<div style="left:760px;top:612px;width:1px;height:22px;background:#9c9c9c"></div>
<div style="left:898px;top:612px;width:1px;height:22px;background:#9c9c9c"></div>
<div class="t cell" style="left:36px;top:618px">Газир.напитки</div>
<div class="t cell" style="left:179px;top:618px">Coca-Cola Light</div>
<div class="t cell" style="left:359px;top:618px">Корона</div>
<div class="t cell" style="left:495px;top:618px;width:122px;text-align:right">201</div>
<div class="t cell" style="left:620px;top:618px;width:140px;text-align:center;">77ZZ</div>
<div style="left:34px;top:253px;width:141px;height:22px;background:#dde7f1"></div>
<div class="t cell" style="left:36px;top:258px">Газир.напитки</div>
<div style="left:31px;top:250px;width:1016px;height:387px;border:2px solid #217346"></div>
<div style="left:762px;top:251px;width:567px;height:413px;background:#f0f0f0;border:1px solid #6e6e6e;box-shadow:1px 2px 14px rgba(0,0,0,0.32)"></div>
<div style="left:763px;top:252px;width:565px;height:37px;background:#fff"></div>
<div class="t" style="left:772px;top:263px;font-size:15px;color:#111">Удалить дубликаты</div>
<div class="t" style="left:1237px;top:261px;font-size:17px;color:#111">?</div>
<svg style="left:1290px;top:262px" width="16" height="16" viewBox="1290 262 16 16"><path d="M1292,264 L1304,276 M1304,264 L1292,276" stroke="#111" stroke-width="1.15"/></svg>
<div class="t dlg" style="left:771px;top:302px">Чтобы удалить повторяющиеся значения, выделите один или несколько столбцов,</div>
<div class="t dlg" style="left:771px;top:318px">содержащих их.</div>
<div style="left:770px;top:337px;width:551px;height:52px;border:1px solid #dcdcdc"></div>
<div style="left:784px;top:349px;width:124px;height:30px;background:#e1e1e1;border:2px solid #0078d7"></div>
<div style="left:786px;top:351px;width:120px;height:26px;border:1px dotted #222"></div>
<div class="t dlg" style="left:817px;top:358px;font-size:12.6px">Выделить все</div>
<div style="left:817px;top:370px;width:8px;height:1px;background:#111"></div>
<div style="left:921px;top:349px;width:147px;height:30px;background:#e1e1e1;border:1px solid #adadad"></div>
<div class="t dlg" style="left:954px;top:358px;font-size:12.6px">Снять выделение</div>
<div style="left:969px;top:370px;width:7px;height:1px;background:#111"></div>
<svg style="left:790px;top:350px" width="170" height="26" viewBox="790 350 170 26"><g fill="none" stroke="#2e8b57" stroke-width="1.6"><path d="M794.5,357 L796.5,359 L799.5,355"/><path d="M794.5,363 L796.5,365 L799.5,361"/><path d="M794.5,369 L796.5,371 L799.5,367"/></g><rect x="797.5" y="354" width="3" height="3" fill="#1f7a3f"/><rect x="797.5" y="360" width="3" height="3" fill="#1f7a3f"/><rect x="797.5" y="366" width="3" height="3" fill="#1f7a3f"/><path d="M802,356.5 H813 M802,359.5 H813 M802,362.5 H813 M802,365.5 H813 M802,368.5 H813 M802,371.5 H813" stroke="#7d8fb0" stroke-width="1"/><path d="M802,359.5 H811 M802,365.5 H811 M802,371.5 H811" stroke="#5b72a0" stroke-width="1.2"/><rect x="931.5" y="356.5" width="4" height="4" fill="#fff" stroke="#5b72a0" stroke-width="1.6"/><rect x="931.5" y="362.5" width="4" height="4" fill="#fff" stroke="#5b72a0" stroke-width="1.6"/><rect x="931.5" y="368.5" width="4" height="4" fill="#fff" stroke="#5b72a0" stroke-width="1.6"/><path d="M939,356.5 H950 M939,359.5 H950 M939,362.5 H950 M939,365.5 H950 M939,368.5 H950 M939,371.5 H950" stroke="#7d8fb0" stroke-width="1"/><path d="M939,359.5 H948 M939,365.5 H948 M939,371.5 H948" stroke="#5b72a0" stroke-width="1.2"/></svg>
<div style="left:1080px;top:350px;width:16px;height:16px;background:#f4f4f4;border:1px solid #333"></div>
<svg style="left:1080px;top:350px" width="16" height="16" viewBox="1080 350 16 16"><path d="M1083,357.2 l3.6,4.3 l6.2,-7.3" fill="none" stroke="#333" stroke-width="1.2"/></svg>
<div class="t dlg" style="left:1104px;top:353px">Мои данные содержат заголовки</div>
<div style="left:1244px;top:366px;width:7px;height:1px;background:#111"></div>
<div style="left:770px;top:405px;width:551px;height:199px;background:#fff;border:1px solid #828282"></div>
<div class="t dlg" style="left:777px;top:414px;font-size:13.4px">Колонны</div>
<div style="left:1318px;top:408px;width:1px;height:25px;background:#e2e2e2"></div>
<div style="left:773px;top:436px;width:16px;height:16px;background:#fff;border:1px solid #333"></div>
<svg style="left:773px;top:436px" width="16" height="16" viewBox="773 436 16 16"><path d="M776,443.2 l3.6,4.3 l6.2,-7.3" fill="none" stroke="#333" stroke-width="1.2"/></svg>
<div class="t dlg" style="left:797px;top:438px;font-size:13.4px">Категория</div>
<div style="left:773px;top:459px;width:16px;height:16px;background:#fff;border:1px solid #333"></div>
<svg style="left:773px;top:459px" width="16" height="16" viewBox="773 459 16 16"><path d="M776,466.2 l3.6,4.3 l6.2,-7.3" fill="none" stroke="#333" stroke-width="1.2"/></svg>
<div class="t dlg" style="left:797px;top:461px;font-size:13.4px">Товар</div>
<div style="left:773px;top:482px;width:16px;height:16px;background:#fff;border:1px solid #333"></div>
<svg style="left:773px;top:482px" width="16" height="16" viewBox="773 482 16 16"><path d="M776,489.2 l3.6,4.3 l6.2,-7.3" fill="none" stroke="#333" stroke-width="1.2"/></svg>
<div class="t dlg" style="left:797px;top:484px;font-size:13.4px">Заказчик</div>
<div style="left:773px;top:505px;width:16px;height:16px;background:#fff;border:1px solid #333"></div>
<svg style="left:773px;top:505px" width="16" height="16" viewBox="773 505 16 16"><path d="M776,512.2 l3.6,4.3 l6.2,-7.3" fill="none" stroke="#333" stroke-width="1.2"/></svg>
<div class="t dlg" style="left:797px;top:507px;font-size:13.4px">Объем, л</div>
<div style="left:773px;top:528px;width:16px;height:16px;background:#fff;border:1px solid #333"></div>
<svg style="left:773px;top:528px" width="16" height="16" viewBox="773 528 16 16"><path d="M776,535.2 l3.6,4.3 l6.2,-7.3" fill="none" stroke="#333" stroke-width="1.2"/></svg>
<div class="t dlg" style="left:797px;top:530px;font-size:13.4px">Код заказа</div>
<div style="left:773px;top:551px;width:16px;height:16px;background:#fff;border:1px solid #333"></div>
<svg style="left:773px;top:551px" width="16" height="16" viewBox="773 551 16 16"><path d="M776,558.2 l3.6,4.3 l6.2,-7.3" fill="none" stroke="#333" stroke-width="1.2"/></svg>
<div class="t dlg" style="left:797px;top:553px;font-size:13.4px">Стоимость</div>
<div style="left:773px;top:574px;width:16px;height:16px;background:#fff;border:1px solid #333"></div>
<svg style="left:773px;top:574px" width="16" height="16" viewBox="773 574 16 16"><path d="M776,581.2 l3.6,4.3 l6.2,-7.3" fill="none" stroke="#333" stroke-width="1.2"/></svg>
<div class="t dlg" style="left:797px;top:576px;font-size:13.4px">Менеджер</div>
<div style="left:1135px;top:625px;width:86px;height:28px;background:#e1e1e1;border:1px solid #adadad"></div>
<div class="t dlg" style="left:1135px;top:633px;width:86px;text-align:center">OK</div>
<div style="left:1234px;top:625px;width:86px;height:28px;background:#e1e1e1;border:1px solid #adadad"></div>
<div class="t dlg" style="left:1234px;top:633px;width:86px;text-align:center">Отмена</div>
<div style="left:1323px;top:650px;width:3px;height:3px;background:#bdbdbd"></div>
<div style="left:1319px;top:654px;width:3px;height:3px;background:#bdbdbd"></div>
<div style="left:1323px;top:654px;width:3px;height:3px;background:#bdbdbd"></div>
<div style="left:1315px;top:658px;width:3px;height:3px;background:#bdbdbd"></div>
<div style="left:1319px;top:658px;width:3px;height:3px;background:#bdbdbd"></div>
<div style="left:1323px;top:658px;width:3px;height:3px;background:#bdbdbd"></div>
<svg style="left:0;top:0" width="1359" height="682" viewBox="0 0 1359 682">
<defs><filter id="sh" x="-20%" y="-20%" width="140%" height="140%"><feDropShadow dx="2.5" dy="3" stdDeviation="2.2" flood-color="#000" flood-opacity="0.55"/></filter></defs>
<g filter="url(#sh)">
<rect x="1276.5" y="61.2" width="44.3" height="38.2" rx="10" ry="10" fill="none" stroke="#fa8036" stroke-width="3.2" stroke-dasharray="3.2 3.5"/>
<line x1="554" y1="24.8" x2="1247.4" y2="76.3" stroke="#fa8036" stroke-width="4.2" stroke-linecap="round"/>
<polygon points="1273.3,78.2 1237.7,84.4 1245.4,76.1 1239.0,66.8" fill="#fa8036"/>
<line x1="1283" y1="104.6" x2="950.9" y2="261.5" stroke="#fa8036" stroke-width="4.4" stroke-linecap="round"/>
<polygon points="923.6,274.5 951.5,251.6 948.9,262.5 959.0,267.5" fill="#fa8036"/>
<line x1="327" y1="288.8" x2="496.1" y2="57.2" stroke="#fa8036" stroke-width="4.5" stroke-dasharray="4.5 4.45"/>
<polygon points="512.6,34.6 499.1,68.1 496.1,57.2 484.9,57.7" fill="#fa8036"/>
</g>
</svg>
</body></html>
